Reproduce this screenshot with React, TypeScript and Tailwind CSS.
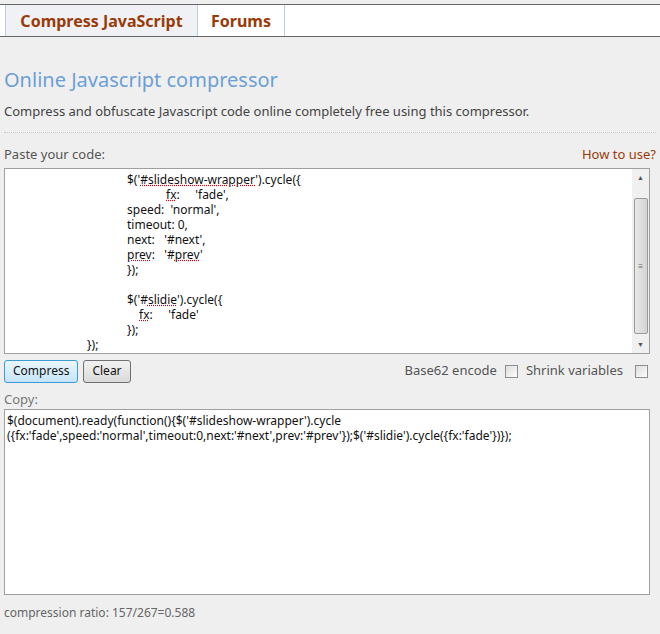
import type { ReactNode } from 'react';

const u = 'underline decoration-dotted decoration-red-600';

const lines: [number, ReactNode][] = [
  [127, <>$('<span className={u}>#slideshow-wrapper</span>').cycle{'({'}</>],
  [166, <><span className={u}>fx</span>:&nbsp;&nbsp;&nbsp;&nbsp;&nbsp;'fade',</>],
  [127, <>speed:&nbsp; 'normal',</>],
  [127, <>timeout: 0,</>],
  [127, <>next:&nbsp;&nbsp; '#next',</>],
  [127, <><span className={u}>prev</span>:&nbsp;&nbsp; '#<span className={u}>prev</span>'</>],
  [127, <>{'});'}</>],
  [127, <>&nbsp;</>],
  [127, <>$('#<span className={u}>slidie</span>').cycle{'({'}</>],
  [139, <><span className={u}>fx</span>:&nbsp;&nbsp;&nbsp;&nbsp; 'fade'</>],
  [127, <>{'});'}</>],
  [87, <>{'});'}</>],
];

function Checkbox() {
  return <span className="inline-block w-[13px] h-[13px] border border-[#8f8f8f] bg-gradient-to-br from-[#dcdcdc] to-white" />;
}

export default function App() {
  return (
    <div className="w-[660px] h-[634px] bg-[#efefef] font-['Liberation_Sans',Arial,sans-serif] text-[12px] text-[#333] overflow-hidden">
      <div className="mt-[4px] h-[33px] bg-white border-t border-b border-[#666] flex pl-[5px]">
        <div className="w-[193px] bg-[#eff1f5] border-l border-r border-[#b9cfdf] flex items-center justify-center text-[#9a3a08] font-bold text-[16px]">
          Compress JavaScript
        </div>
        <div className="w-[87px] border-r border-[#b9cfdf] flex items-center justify-center text-[#9a3a08] font-bold text-[16px]">
          Forums
        </div>
      </div>
      <div className="px-[4px]">
        <h1 className="mt-[31px] text-[20px] leading-[24px] text-[#6b9fd6]">Online Javascript compressor</h1>
        <p className="mt-[10px] text-[13px] text-[#444]">Compress and obfuscate Javascript code online completely free using this compressor.</p>
        <div className="mt-[10px] border-t border-dotted border-[#c8c8c8]" />
        <div className="mt-[13px] flex justify-between text-[13px] leading-[16px]">
          <span className="text-[#555]">Paste your code:</span>
          <span className="text-[#9a3a08]">How to use?</span>
        </div>
        <div className="mt-[6px] h-[186px] w-[646px] bg-white border border-[#a0a0a0] flex">
          <div className="flex-1 pt-[3px] text-[12px] leading-[15px] text-[#111]">
            {lines.map(([x, c], i) => (
              <div key={i} style={{ paddingLeft: x - 5 }}>{c}</div>
            ))}
          </div>
          <div className="w-[17px] bg-[#f0f0f0] flex flex-col items-center">
            <span className="h-[17px] text-[7px] leading-[17px] text-[#555]">▲</span>
            <div className="w-[14px] h-[136px] mt-[12px] rounded-[2px] border border-[#9a9a9a] bg-gradient-to-r from-[#e8e8e8] to-[#d4d4d4] flex items-center justify-center text-[8px] text-[#666]">≡</div>
            <span className="mt-auto h-[17px] text-[7px] leading-[17px] text-[#555]">▼</span>
          </div>
        </div>
        <div className="mt-[6px] flex items-center">
          <button className="h-[23px] px-[8px] border border-[#3c9ad8] rounded-[3px] bg-gradient-to-b from-[#eaf6fd] to-[#c6e4f7] text-[12px] text-[#111]">Compress</button>
          <button className="ml-[5px] h-[23px] px-[8px] border border-[#707070] rounded-[3px] bg-gradient-to-b from-[#f2f2f2] to-[#dadada] text-[12px] text-[#111]">Clear</button>
          <div className="ml-auto flex items-center gap-[8px] pr-[8px] text-[13px] text-[#555]">
            <span>Base62 encode</span><Checkbox />
            <span>Shrink variables</span><span className="ml-[4px] flex"><Checkbox /></span>
          </div>
        </div>
        <div className="mt-[8px] text-[13px] leading-[16px] text-[#777]">Copy:</div>
        <div className="mt-[2px] h-[186px] w-[646px] bg-white border border-[#a0a0a0] px-[2px] pt-[3px] text-[12px] leading-[15px] text-[#111]">
          {"$(document).ready(function(){$('#slideshow-wrapper').cycle"}<br />
          {"({fx:'fade',speed:'normal',timeout:0,next:'#next',prev:'#prev'});$('#slidie').cycle({fx:'fade'})});"}
        </div>
        <div className="mt-[9px] text-[12px] text-[#666]">compression ratio: 157/267=0.588</div>
      </div>
    </div>
  );
}
